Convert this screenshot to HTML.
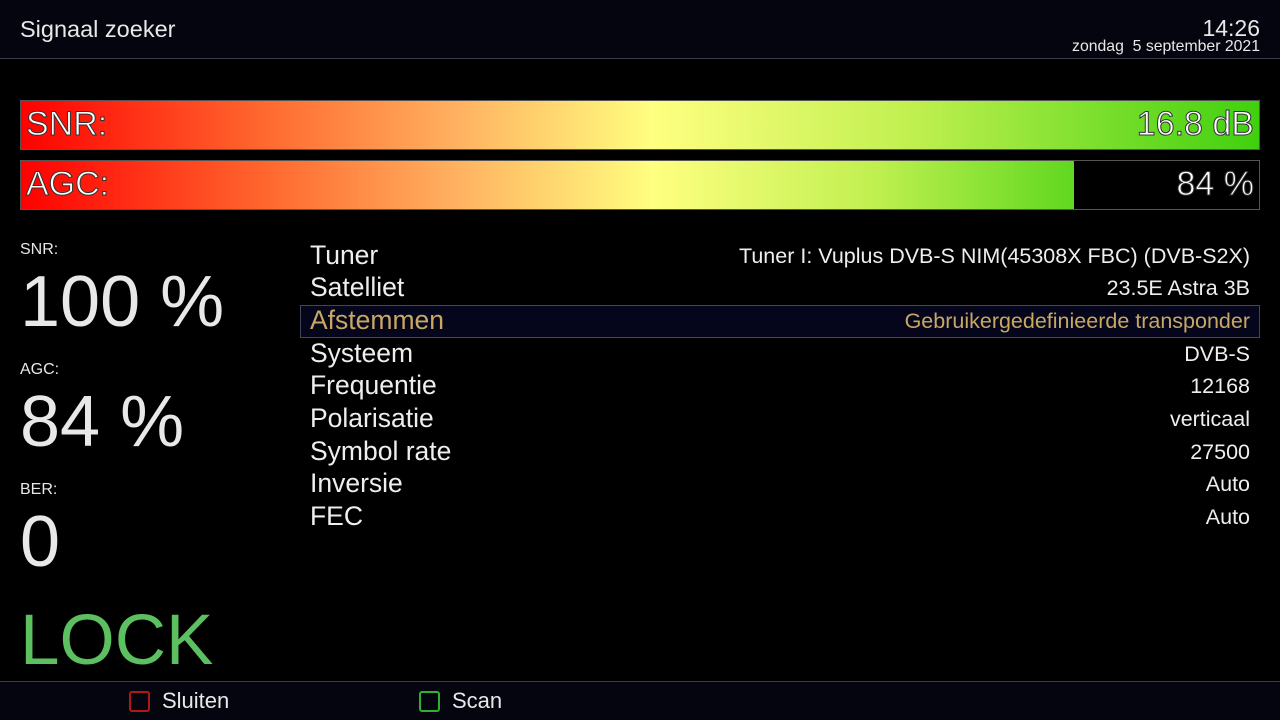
<!DOCTYPE html>
<html><head><meta charset="utf-8"><style>
*{margin:0;padding:0;box-sizing:border-box}
body{width:1280px;height:720px;background:#000;font-family:"Liberation Sans",sans-serif;color:#eee;position:relative;overflow:hidden}
.hdr{position:absolute;left:0;top:0;width:1280px;height:59px;background:#05050f;border-bottom:1px solid #3a3a48}
.t{position:absolute;left:20px;top:16px;font-size:23.5px;color:#e8e8e8}
.time{position:absolute;right:20px;top:15px;font-size:23px;color:#e8e8e8}
.date{position:absolute;right:20px;top:38px;font-size:15.8px;color:#e8e8e8}
.bar{position:absolute;left:20px;width:1240px;height:50px;border:1px solid #555;background:#000}
.fill{position:absolute;left:0;top:0;height:100%;background:linear-gradient(90deg,#f00 0%,#ff6a30 20%,#ffb060 35%,#ffff80 51%,#c0f050 72%,#40d010 100%)}
.bl{position:absolute;left:5px;top:4px;font-size:34px;color:#fff;-webkit-text-stroke:1px #333}
.br{position:absolute;right:5px;top:4px;font-size:34px;color:#fff;-webkit-text-stroke:1px #333}
.sl{position:absolute;left:20px;font-size:16px;color:#e8e8e8}
.big{position:absolute;left:20px;font-size:72px;color:#e8e8e8}
.lock{position:absolute;left:20px;top:600px;font-size:71px;color:#5cbf60}
.row{position:absolute;left:300px;width:960px;height:33px}
.row .l{position:absolute;left:10px;top:0px;font-size:26.5px;color:#eee}
.row .v{position:absolute;right:10px;top:4px;font-size:21.5px;color:#eee}
.sel{background:#05051c;border:1px solid #44445a}
.sel .l,.sel .v{color:#c8a860}
.ftr{position:absolute;left:0;top:681px;width:1280px;height:39px;background:#05050f;border-top:1px solid #3a3a48}
.btn{position:absolute;top:9px;width:21px;height:21px;border:2px solid;border-radius:3px}
.bt{position:absolute;top:6px;font-size:22px;color:#e8e8e8}
</style></head><body>
<div class="hdr"><div class="t">Signaal zoeker</div><div class="time">14:26</div><div class="date">zondag&nbsp; 5 september 2021</div></div>
<div class="bar" style="top:100px"><div class="fill" style="width:100%"></div><div class="bl">SNR:</div><div class="br">16.8 dB</div></div>
<div class="bar" style="top:160px"><div class="fill" style="width:1053px;background:linear-gradient(90deg,#f00 0%,#ff6a30 24%,#ffb060 41%,#ffff80 60%,#c0f050 81%,#60d820 100%)"></div><div class="bl">AGC:</div><div class="br">84 %</div></div>
<div class="sl" style="top:241px">SNR:</div><div class="big" style="top:261px">100 %</div>
<div class="sl" style="top:361px">AGC:</div><div class="big" style="top:381px">84 %</div>
<div class="sl" style="top:481px">BER:</div><div class="big" style="top:501px">0</div>
<div class="lock">LOCK</div>
<div class="row" style="top:240px"><div class="l">Tuner</div><div class="v">Tuner I: Vuplus DVB-S NIM(45308X FBC) (DVB-S2X)</div></div>
<div class="row" style="top:272px"><div class="l">Satelliet</div><div class="v">23.5E Astra 3B</div></div>
<div class="row sel" style="top:305px"><div class="l" style="left:9px;top:-1px">Afstemmen</div><div class="v" style="right:9px;top:3px">Gebruikergedefinieerde transponder</div></div>
<div class="row" style="top:338px"><div class="l">Systeem</div><div class="v">DVB-S</div></div>
<div class="row" style="top:370px"><div class="l">Frequentie</div><div class="v">12168</div></div>
<div class="row" style="top:403px"><div class="l">Polarisatie</div><div class="v">verticaal</div></div>
<div class="row" style="top:436px"><div class="l">Symbol rate</div><div class="v">27500</div></div>
<div class="row" style="top:468px"><div class="l">Inversie</div><div class="v">Auto</div></div>
<div class="row" style="top:501px"><div class="l">FEC</div><div class="v">Auto</div></div>
<div class="ftr"><div class="btn" style="left:129px;border-color:#b01818"></div><div class="bt" style="left:162px">Sluiten</div><div class="btn" style="left:419px;border-color:#30b030"></div><div class="bt" style="left:452px">Scan</div></div>
</body></html>
